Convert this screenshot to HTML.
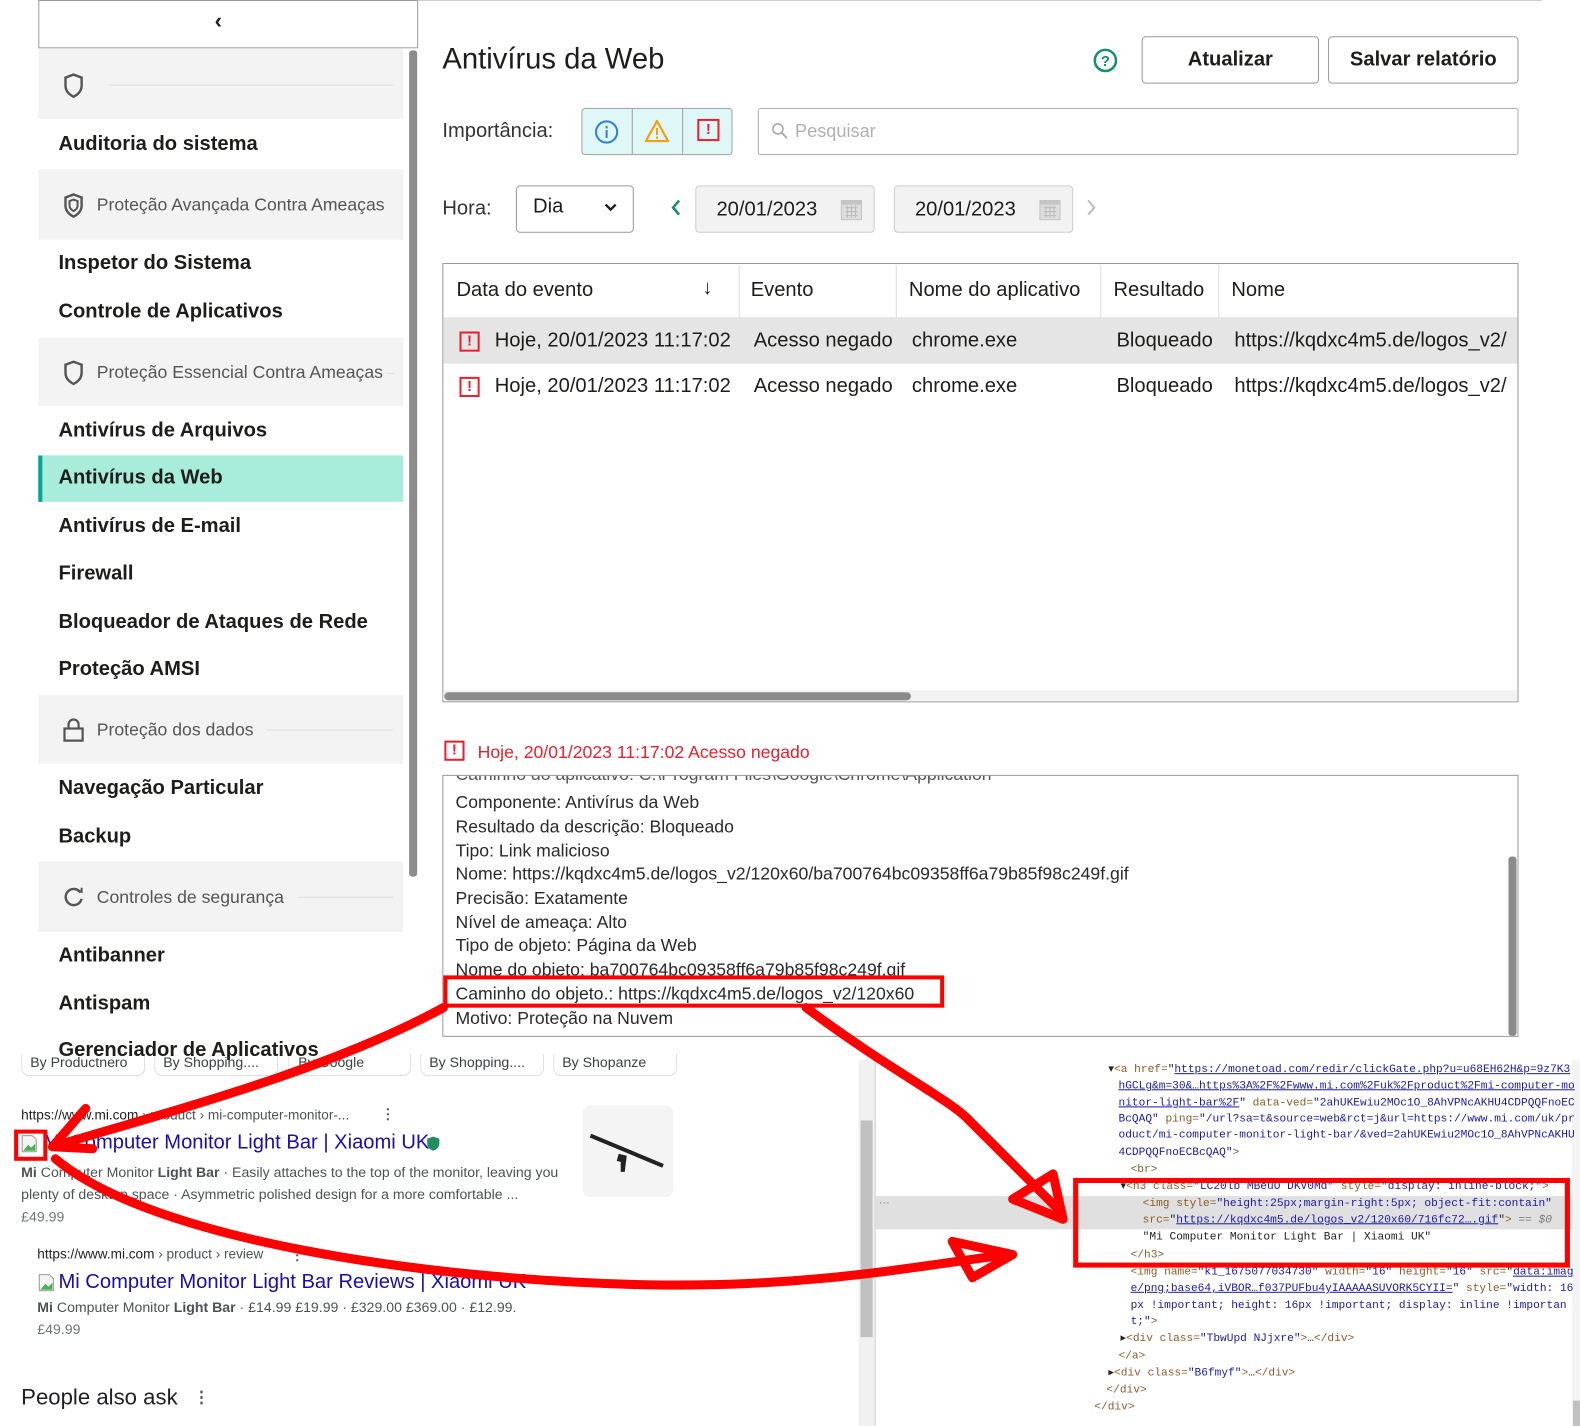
<!DOCTYPE html>
<html><head><meta charset="utf-8"><style>
*{margin:0;padding:0;box-sizing:border-box}
body{width:1580px;height:1415px;position:relative;overflow:hidden;background:#fff;font-family:"Liberation Sans",sans-serif;color:#1d1d1b}
#w{position:absolute;left:0;top:0;width:1568px;height:1404px;transform:scale(1.00765);transform-origin:0 0}
.a{position:absolute;white-space:nowrap}
.sb{font-size:20px;font-weight:bold;color:#1d1d1b}
.grp{font-size:17.5px;color:#555}
.gsec{position:absolute;left:38px;width:362px;background:#f3f3f3}
.wsec{position:absolute;left:38px;width:362px;background:#fff}
.td{font-size:20px;color:#1d1d1b}
.dl{font-size:17.5px;color:#2a2a2a;left:452px}
.mono{font-family:"Liberation Mono",monospace;font-size:11.1px;color:#222;line-height:16px}
.tg{color:#8a5a2a}.av{color:#1a1aa6}.lk{color:#1a1aa6;text-decoration:underline}
.ex{display:inline-block;width:20px;height:20px;border:2px solid #e8202e;color:#e8202e;font-weight:bold;font-size:15px;line-height:16px;text-align:center}
</style></head><body><div id="w">

<div class="a" style="left:38px;top:0;width:377px;height:48px;border:1px solid #9a9a9a;background:#fff"></div>
<div class="a" style="left:213px;top:8px;font-size:22px;font-weight:bold">&#8249;</div>
<div class="gsec" style="top:48px;height:70px"></div>
<div class="wsec" style="top:118px;height:50px"></div>
<div class="gsec" style="top:168px;height:70px"></div>
<div class="wsec" style="top:238px;height:97px"></div>
<div class="gsec" style="top:335px;height:68px"></div>
<div class="wsec" style="top:403px;height:287px"></div>
<div class="gsec" style="top:690px;height:68px"></div>
<div class="wsec" style="top:758px;height:97px"></div>
<div class="gsec" style="top:855px;height:70px"></div>
<div class="wsec" style="top:925px;height:105px"></div>
<div class="a" style="left:400px;top:48px;width:15px;height:982px;background:#fff"></div>
<div class="a" style="left:406px;top:50px;width:8px;height:820px;background:#8c8c8c;border-radius:3px"></div>

<svg class="a" style="left:62px;top:72px" width="22" height="26" viewBox="0 0 22 26"><path d="M11 2 L19 5 V13 C19 19 15 22 11 24 C7 22 3 19 3 13 V5 Z" fill="none" stroke="#555" stroke-width="2.4"/></svg>
<div class="a" style="left:108px;top:84px;width:282px;height:1px;background:#ddd"></div>
<div class="a sb" style="left:58px;top:132px">Auditoria do sistema</div>
<svg class="a" style="left:62px;top:191px" width="22" height="26" viewBox="0 0 22 26"><path d="M11 2 L19 5 V13 C19 19 15 22 11 24 C7 22 3 19 3 13 V5 Z" fill="none" stroke="#555" stroke-width="2.4"/><path d="M11 7 L15 8.5 V13 C15 16 13 17.5 11 18.5 C9 17.5 7 16 7 13 V8.5 Z" fill="none" stroke="#555" stroke-width="2"/></svg>
<div class="a grp" style="left:96px;top:193px">Proteção Avançada Contra Ameaças</div>
<div class="a sb" style="left:58px;top:250px">Inspetor do Sistema</div>
<div class="a sb" style="left:58px;top:298px">Controle de Aplicativos</div>
<svg class="a" style="left:62px;top:357px" width="22" height="26" viewBox="0 0 22 26"><path d="M11 2 L19 5 V13 C19 19 15 22 11 24 C7 22 3 19 3 13 V5 Z" fill="none" stroke="#555" stroke-width="2.4"/></svg>
<div class="a grp" style="left:96px;top:359px">Proteção Essencial Contra Ameaças</div>
<div class="a" style="left:384px;top:370px;width:8px;height:1px;background:#ddd"></div>
<div class="a sb" style="left:58px;top:416px">Antivírus de Arquivos</div>
<div class="a" style="left:38px;top:452px;width:362px;height:46px;background:#a8ecdb;border-left:4px solid #00a88e"></div>
<div class="a sb" style="left:58px;top:463px">Antivírus da Web</div>
<div class="a sb" style="left:58px;top:511px">Antivírus de E-mail</div>
<div class="a sb" style="left:58px;top:558px">Firewall</div>
<div class="a sb" style="left:58px;top:606px">Bloqueador de Ataques de Rede</div>
<div class="a sb" style="left:58px;top:653px">Proteção AMSI</div>
<svg class="a" style="left:62px;top:712px" width="22" height="26" viewBox="0 0 22 26"><rect x="2" y="11" width="18" height="12" fill="none" stroke="#555" stroke-width="2.2"/><path d="M6 11 V7 A5 5 0 0 1 16 7 V11" fill="none" stroke="#555" stroke-width="2.2"/></svg>
<div class="a grp" style="left:96px;top:714px">Proteção dos dados</div>
<div class="a" style="left:264px;top:724px;width:126px;height:1px;background:#ddd"></div>
<div class="a sb" style="left:58px;top:771px">Navegação Particular</div>
<div class="a sb" style="left:58px;top:819px">Backup</div>
<svg class="a" style="left:61px;top:878px" width="24" height="26" viewBox="0 0 24 26"><path d="M19 8 A8 8 0 1 0 20 14" fill="none" stroke="#555" stroke-width="2.4"/><path d="M16 6 L20 7 L20 3" fill="none" stroke="#555" stroke-width="2"/></svg>
<div class="a grp" style="left:96px;top:880px">Controles de segurança</div>
<div class="a" style="left:296px;top:890px;width:94px;height:1px;background:#ddd"></div>
<div class="a sb" style="left:58px;top:937px">Antibanner</div>
<div class="a sb" style="left:58px;top:985px">Antispam</div>

<div class="a" style="left:415px;top:0;width:1115px;height:1px;background:#ccc"></div>
<div class="a" style="left:439px;top:43px;font-size:29px;color:#1d1d1b">Antivírus da Web</div>
<svg class="a" style="left:1084px;top:47px" width="26" height="26" viewBox="0 0 26 26"><circle cx="13" cy="13" r="10.5" fill="none" stroke="#14906e" stroke-width="2.5"/><text x="13" y="18.5" text-anchor="middle" font-family="Liberation Sans" font-weight="bold" font-size="15" fill="#14906e">?</text></svg>
<div class="a" style="left:1133px;top:36px;width:176px;height:47px;border:1.5px solid #999;border-radius:4px;font-size:20px;font-weight:bold;text-align:center;line-height:44px">Atualizar</div>
<div class="a" style="left:1318px;top:36px;width:189px;height:47px;border:1.5px solid #999;border-radius:4px;font-size:20px;font-weight:bold;text-align:center;line-height:44px">Salvar relatório</div>

<div class="a" style="left:439px;top:119px;font-size:20px;color:#333">Importância:</div>
<div class="a" style="left:577px;top:107px;width:150px;height:47px;border:1.5px solid #a0a0a0;border-radius:4px;background:#dff7f7"></div>
<div class="a" style="left:627px;top:108px;width:1px;height:45px;background:#a0a0a0"></div>
<div class="a" style="left:677px;top:108px;width:1px;height:45px;background:#a0a0a0"></div>
<svg class="a" style="left:589px;top:118px" width="26" height="26" viewBox="0 0 26 26"><circle cx="13" cy="13" r="10.5" fill="none" stroke="#2f80d0" stroke-width="2"/><rect x="12" y="11" width="2" height="8" fill="#2f80d0"/><rect x="12" y="7" width="2" height="2.4" fill="#2f80d0"/></svg>
<svg class="a" style="left:639px;top:117px" width="26" height="26" viewBox="0 0 26 26"><path d="M13 3 L24 23 H2 Z" fill="none" stroke="#f0a010" stroke-width="2.2" stroke-linejoin="round"/><rect x="12" y="10" width="2" height="7" fill="#f0a010"/><rect x="12" y="18.5" width="2" height="2.2" fill="#f0a010"/></svg>
<div class="a ex" style="left:692px;top:118px;width:22px;height:22px;line-height:18px">!</div>
<div class="a" style="left:752px;top:107px;width:755px;height:47px;border:1.5px solid #a8a8a8;border-radius:3px"></div>
<svg class="a" style="left:765px;top:121px" width="18" height="18" viewBox="0 0 18 18"><circle cx="7" cy="7" r="5" fill="none" stroke="#aaa" stroke-width="1.6"/><path d="M11 11 L16 16" stroke="#aaa" stroke-width="1.8"/></svg>
<div class="a" style="left:789px;top:120px;font-size:18px;color:#b0b0b0">Pesquisar</div>

<div class="a" style="left:439px;top:196px;font-size:20px;color:#333">Hora:</div>
<div class="a" style="left:512px;top:184px;width:117px;height:47px;border:1.5px solid #999;border-radius:4px"></div>
<div class="a" style="left:529px;top:194px;font-size:20px">Dia</div>
<svg class="a" style="left:599px;top:201px" width="14" height="10" viewBox="0 0 14 10"><path d="M2 2 L7 7 L12 2" fill="none" stroke="#1d1d1b" stroke-width="2.4"/></svg>
<svg class="a" style="left:664px;top:196px" width="14" height="20" viewBox="0 0 14 20"><path d="M10 3 L4 10 L10 17" fill="none" stroke="#14906e" stroke-width="2.5"/></svg>
<div class="a" style="left:690px;top:184px;width:178px;height:47px;border:1.5px solid #ccc;border-radius:4px;background:#f2f2f2"></div>
<div class="a" style="left:711px;top:197px;font-size:20px">20/01/2023</div>
<div class="a" style="left:887px;top:184px;width:178px;height:47px;border:1.5px solid #ccc;border-radius:4px;background:#f2f2f2"></div>
<div class="a" style="left:908px;top:197px;font-size:20px">20/01/2023</div>
<svg class="a" style="left:833px;top:196px" width="24" height="24" viewBox="0 0 24 24"><rect x="2" y="3" width="20" height="19" fill="#ddd" stroke="#c4c4c4"/><rect x="2" y="3" width="20" height="4" fill="#c4c4c4"/><path d="M6 10h12M6 14h12M6 18h12M8 8v12M12 8v12M16 8v12" stroke="#bbb" stroke-width="1"/></svg>
<svg class="a" style="left:1030px;top:196px" width="24" height="24" viewBox="0 0 24 24"><rect x="2" y="3" width="20" height="19" fill="#ddd" stroke="#c4c4c4"/><rect x="2" y="3" width="20" height="4" fill="#c4c4c4"/><path d="M6 10h12M6 14h12M6 18h12M8 8v12M12 8v12M16 8v12" stroke="#bbb" stroke-width="1"/></svg>
<svg class="a" style="left:1076px;top:196px" width="14" height="20" viewBox="0 0 14 20"><path d="M4 3 L10 10 L4 17" fill="none" stroke="#bbb" stroke-width="2"/></svg>

<div class="a" style="left:439px;top:261px;width:1068px;height:436px;border:1.5px solid #999"></div>
<div class="a" style="left:440px;top:315px;width:1066px;height:1px;background:#ddd"></div>
<div class="a" style="left:733px;top:263px;width:1px;height:52px;background:#ddd"></div>
<div class="a" style="left:889px;top:263px;width:1px;height:52px;background:#ddd"></div>
<div class="a" style="left:1092px;top:263px;width:1px;height:52px;background:#ddd"></div>
<div class="a" style="left:1209px;top:263px;width:1px;height:52px;background:#ddd"></div>
<div class="a td" style="left:453px;top:277px">Data do evento</div>
<div class="a td" style="left:697px;top:275px;font-weight:bold">&#8595;</div>
<div class="a td" style="left:745px;top:277px">Evento</div>
<div class="a td" style="left:902px;top:277px">Nome do aplicativo</div>
<div class="a td" style="left:1105px;top:277px">Resultado</div>
<div class="a td" style="left:1222px;top:277px">Nome</div>
<div class="a" style="left:440px;top:316px;width:1066px;height:45px;background:#e5e5e5"></div>
<div class="a ex" style="left:456px;top:329px">!</div>
<div class="a td" style="left:491px;top:327px">Hoje, 20/01/2023 11:17:02</div>
<div class="a td" style="left:748px;top:327px">Acesso negado</div>
<div class="a td" style="left:905px;top:327px">chrome.exe</div>
<div class="a td" style="left:1108px;top:327px">Bloqueado</div>
<div class="a td" style="left:1225px;top:327px;width:281px;overflow:hidden">https://kqdxc4m5.de/logos_v2/</div>
<div class="a ex" style="left:456px;top:374px">!</div>
<div class="a td" style="left:491px;top:372px">Hoje, 20/01/2023 11:17:02</div>
<div class="a td" style="left:748px;top:372px">Acesso negado</div>
<div class="a td" style="left:905px;top:372px">chrome.exe</div>
<div class="a td" style="left:1108px;top:372px">Bloqueado</div>
<div class="a td" style="left:1225px;top:372px;width:281px;overflow:hidden">https://kqdxc4m5.de/logos_v2/</div>
<div class="a" style="left:440px;top:685px;width:1066px;height:10px;background:#f2f2f2"></div>
<div class="a" style="left:441px;top:687px;width:463px;height:8px;background:#8c8c8c;border-radius:4px"></div>

<div class="a ex" style="left:441px;top:735px">!</div>
<div class="a" style="left:474px;top:736px;font-size:17.5px;color:#e8202e">Hoje, 20/01/2023 11:17:02 Acesso negado</div>

<div class="a" style="left:439px;top:769px;width:1068px;height:260px;border:1.5px solid #999;overflow:hidden">
<div style="position:absolute;left:12px;top:-12px;font-size:17.5px;color:#555">Caminho do aplicativo: C:\Program Files\Google\Chrome\Application</div>
</div>
<div class="a" style="left:1497px;top:850px;width:8px;height:178px;background:#8c8c8c;border-radius:3px"></div>
<div class="a dl" style="top:786px">Componente: Antivírus da Web</div>
<div class="a dl" style="top:810px">Resultado da descrição: Bloqueado</div>
<div class="a dl" style="top:834px">Tipo: Link malicioso</div>
<div class="a dl" style="top:857px">Nome: https://kqdxc4m5.de/logos_v2/120x60/ba700764bc09358ff6a79b85f98c249f.gif</div>
<div class="a dl" style="top:881px">Precisão: Exatamente</div>
<div class="a dl" style="top:905px">Nível de ameaça: Alto</div>
<div class="a dl" style="top:928px">Tipo de objeto: Página da Web</div>
<div class="a dl" style="top:952px">Nome do objeto: ba700764bc09358ff6a79b85f98c249f.gif</div>
<div class="a dl" style="top:976px">Caminho do objeto.: https://kqdxc4m5.de/logos_v2/120x60</div>
<div class="a dl" style="top:1000px">Motivo: Proteção na Nuvem</div>
<div class="a" style="left:440px;top:968px;width:497px;height:32px;border:4px solid #f00"></div>

<div class="a" style="left:0;top:1030px;width:852px;height:385px;background:#fff"></div>
<div class="a" style="left:21px;top:1030px;width:123px;height:38px;border:1px solid #dadce0;border-top:none;border-radius:0 0 8px 8px"></div>
<div class="a" style="left:153px;top:1030px;width:123px;height:38px;border:1px solid #dadce0;border-top:none;border-radius:0 0 8px 8px"></div>
<div class="a" style="left:286px;top:1030px;width:122px;height:38px;border:1px solid #dadce0;border-top:none;border-radius:0 0 8px 8px"></div>
<div class="a" style="left:417px;top:1030px;width:123px;height:38px;border:1px solid #dadce0;border-top:none;border-radius:0 0 8px 8px"></div>
<div class="a" style="left:549px;top:1030px;width:123px;height:38px;border:1px solid #dadce0;border-top:none;border-radius:0 0 8px 8px"></div>
<div class="a" style="left:30px;top:1046px;font-size:14px;color:#3c4043">By Productnero</div>
<div class="a" style="left:162px;top:1046px;font-size:14px;color:#3c4043">By Shopping....</div>
<div class="a" style="left:296px;top:1046px;font-size:14px;color:#3c4043">By Google</div>
<div class="a" style="left:426px;top:1046px;font-size:14px;color:#3c4043">By Shopping....</div>
<div class="a" style="left:558px;top:1046px;font-size:14px;color:#3c4043">By Shopanze</div>
<div class="a" style="left:0;top:1030px;width:852px;height:16px;background:#fff"></div>
<div class="a sb" style="left:58px;top:1031px">Gerenciador de Aplicativos</div>

<div class="a" style="left:21px;top:1099px;font-size:13.5px;color:#202124">https://www.mi.com <span style="color:#4d5156">› product › mi-computer-monitor-...</span></div>
<div class="a" style="left:378px;top:1097px;font-size:14px;color:#555;font-weight:bold">&#8942;</div>
<svg class="a" style="left:20px;top:1126px" width="18" height="18" viewBox="0 0 18 18"><path d="M2 1 H12 L16 5 V17 H2 Z" fill="#f4f4f4" stroke="#999"/><path d="M3 16 L8 10 L11 13 L15 9 V16 Z" fill="#4caf50"/></svg>
<div class="a" style="left:43px;top:1123px;font-size:20px;color:#1a0dab">Mi Computer Monitor Light Bar | Xiaomi UK</div>
<svg class="a" style="left:423px;top:1127px" width="14" height="16" viewBox="0 0 14 16"><path d="M7 1 L13 3 V8 C13 12 10 14 7 15 C4 14 1 12 1 8 V3 Z" fill="#1e8e5e"/></svg>
<div class="a" style="left:21px;top:1155px;font-size:14px;color:#4d5156"><b>Mi</b> Computer Monitor <b>Light Bar</b> · Easily attaches to the top of the monitor, leaving you</div>
<div class="a" style="left:21px;top:1177px;font-size:14px;color:#4d5156">plenty of desktop space · Asymmetric polished design for a more comfortable ...</div>
<div class="a" style="left:21px;top:1199px;font-size:14px;color:#70757a">£49.99</div>
<div class="a" style="left:578px;top:1097px;width:90px;height:91px;background:#f4f4f4;border-radius:8px"></div>
<svg class="a" style="left:578px;top:1097px" width="90" height="91" viewBox="0 0 90 91"><path d="M8 30 L80 60" stroke="#222" stroke-width="4"/><path d="M36 48 L44 50 L42 66 L38 66 L38 56 L34 55 Z" fill="#222"/></svg>
<div class="a" style="left:14px;top:1121px;width:33px;height:31px;border:4px solid #f00"></div>

<div class="a" style="left:37px;top:1237px;font-size:13.5px;color:#202124">https://www.mi.com <span style="color:#4d5156">› product › review</span></div>
<div class="a" style="left:288px;top:1237px;font-size:14px;color:#555;font-weight:bold">&#8942;</div>
<svg class="a" style="left:37px;top:1264px" width="18" height="18" viewBox="0 0 18 18"><path d="M2 1 H12 L16 5 V17 H2 Z" fill="#f4f4f4" stroke="#999"/><path d="M3 16 L8 10 L11 13 L15 9 V16 Z" fill="#4caf50"/></svg>
<div class="a" style="left:58px;top:1261px;font-size:20px;color:#1a0dab">Mi Computer Monitor Light Bar Reviews | Xiaomi UK</div>
<div class="a" style="left:37px;top:1289px;font-size:14px;color:#4d5156"><b>Mi</b> Computer Monitor <b>Light Bar</b> · £14.99 £19.99 · £329.00 £369.00 · £12.99.</div>
<div class="a" style="left:37px;top:1311px;font-size:14px;color:#70757a">£49.99</div>
<div class="a" style="left:21px;top:1374px;font-size:22px;color:#202124">People also ask</div>
<div class="a" style="left:192px;top:1377px;font-size:16px;color:#555;font-weight:bold">&#8942;</div>

<div class="a" style="left:852px;top:1052px;width:16px;height:363px;background:#f1f1f1"></div>
<div class="a" style="left:854px;top:1112px;width:12px;height:215px;background:#c1c1c1"></div>
<div class="a" style="left:868px;top:1052px;width:1px;height:363px;background:#ccc"></div>

<div class="a" style="left:869px;top:1187px;width:691px;height:33px;background:#e0e0e0"></div>
<div class="a" style="left:872px;top:1188px;font-size:11px;color:#777">···</div>
<div class="a" style="left:1560px;top:1052px;width:9px;height:363px;background:#f4f4f4"></div>
<div class="a" style="left:1561px;top:1390px;width:7px;height:25px;background:#c1c1c1"></div>
<div class="a mono" style="left:1100px;top:1054px">▾<span class="tg">&lt;a href=</span>"<span class="lk">https://monetoad.com/redir/clickGate.php?u=u68EH62H&amp;p=9z7K3</span></div>
<div class="a mono" style="left:1110px;top:1070px"><span class="lk">hGCLg&amp;m=30&amp;…https%3A%2F%2Fwww.mi.com%2Fuk%2Fproduct%2Fmi-computer-mo</span></div>
<div class="a mono" style="left:1110px;top:1087px"><span class="lk">nitor-light-bar%2F</span>" <span class="tg">data-ved=</span><span class="av">"2ahUKEwiu2MOc1O_8AhVPNcAKHU4CDPQQFnoEC</span></div>
<div class="a mono" style="left:1110px;top:1103px"><span class="av">BcQAQ"</span> <span class="tg">ping=</span><span class="av">"/url?sa=t&amp;source=web&amp;rct=j&amp;url=https://www.mi.com/uk/pr</span></div>
<div class="a mono" style="left:1110px;top:1119px"><span class="av">oduct/mi-computer-monitor-light-bar/&amp;ved=2ahUKEwiu2MOc1O_8AhVPNcAKHU</span></div>
<div class="a mono" style="left:1110px;top:1136px"><span class="av">4CDPQQFnoECBcQAQ"</span><span class="tg">&gt;</span></div>
<div class="a mono" style="left:1122px;top:1153px"><span class="tg">&lt;br&gt;</span></div>
<div class="a mono" style="left:1112px;top:1170px">▾<span class="tg">&lt;h3 class=</span><span class="av">"LC20lb MBeuO DKV0Md"</span> <span class="tg">style=</span><span class="av">"display: inline-block;"</span><span class="tg">&gt;</span></div>
<div class="a mono" style="left:1134px;top:1187px"><span class="tg">&lt;img style=</span><span class="av">"height:25px;margin-right:5px; object-fit:contain"</span></div>
<div class="a mono" style="left:1134px;top:1203px"><span class="tg">src=</span>"<span class="lk">https://kqdxc4m5.de/logos_v2/120x60/716fc72….gif</span>"<span class="tg">&gt;</span> <i style="color:#777">== $0</i></div>
<div class="a mono" style="left:1134px;top:1220px">"Mi Computer Monitor Light Bar | Xiaomi UK"</div>
<div class="a mono" style="left:1122px;top:1238px"><span class="tg">&lt;/h3&gt;</span></div>
<div class="a mono" style="left:1122px;top:1255px"><span class="tg">&lt;img name=</span><span class="av">"k1_1675077034730"</span> <span class="tg">width=</span><span class="av">"16"</span> <span class="tg">height=</span><span class="av">"16"</span> <span class="tg">src=</span>"<span class="lk">data:imag</span></div>
<div class="a mono" style="left:1122px;top:1271px"><span class="lk">e/png;base64,iVBOR…f037PUFbu4yIAAAAASUVORK5CYII=</span>" <span class="tg">style=</span><span class="av">"width: 16</span></div>
<div class="a mono" style="left:1122px;top:1288px"><span class="av">px !important; height: 16px !important; display: inline !importan</span></div>
<div class="a mono" style="left:1122px;top:1304px"><span class="av">t;"</span><span class="tg">&gt;</span></div>
<div class="a mono" style="left:1112px;top:1321px">▸<span class="tg">&lt;div class=</span><span class="av">"TbwUpd NJjxre"</span><span class="tg">&gt;</span>…<span class="tg">&lt;/div&gt;</span></div>
<div class="a mono" style="left:1110px;top:1338px"><span class="tg">&lt;/a&gt;</span></div>
<div class="a mono" style="left:1100px;top:1355px">▸<span class="tg">&lt;div class=</span><span class="av">"B6fmyf"</span><span class="tg">&gt;</span>…<span class="tg">&lt;/div&gt;</span></div>
<div class="a mono" style="left:1098px;top:1372px"><span class="tg">&lt;/div&gt;</span></div>
<div class="a mono" style="left:1086px;top:1389px"><span class="tg">&lt;/div&gt;</span></div>
<div class="a" style="left:1065px;top:1169px;width:493px;height:89px;border:5px solid #f00"></div>

<svg class="a" style="left:0;top:0" width="1580" height="1415" viewBox="0 0 1580 1415">
<g fill="none" stroke="#f00" stroke-width="9" stroke-linecap="round" stroke-linejoin="round">
<path d="M440 1000 C330 1060 180 1100 55 1137"/>
<path d="M85 1100 L52 1138 L92 1140"/>
<path d="M55 1150 C150 1230 420 1270 640 1275 C800 1278 900 1258 1000 1245"/>
<path d="M945 1232 L1005 1245 L965 1268 Z"/>
<path d="M800 1000 C880 1060 940 1090 960 1110 C990 1140 1020 1170 1050 1200"/>
<path d="M1005 1190 L1055 1210 L1045 1165 Z"/>
</g>
</svg>
</div></body></html>
